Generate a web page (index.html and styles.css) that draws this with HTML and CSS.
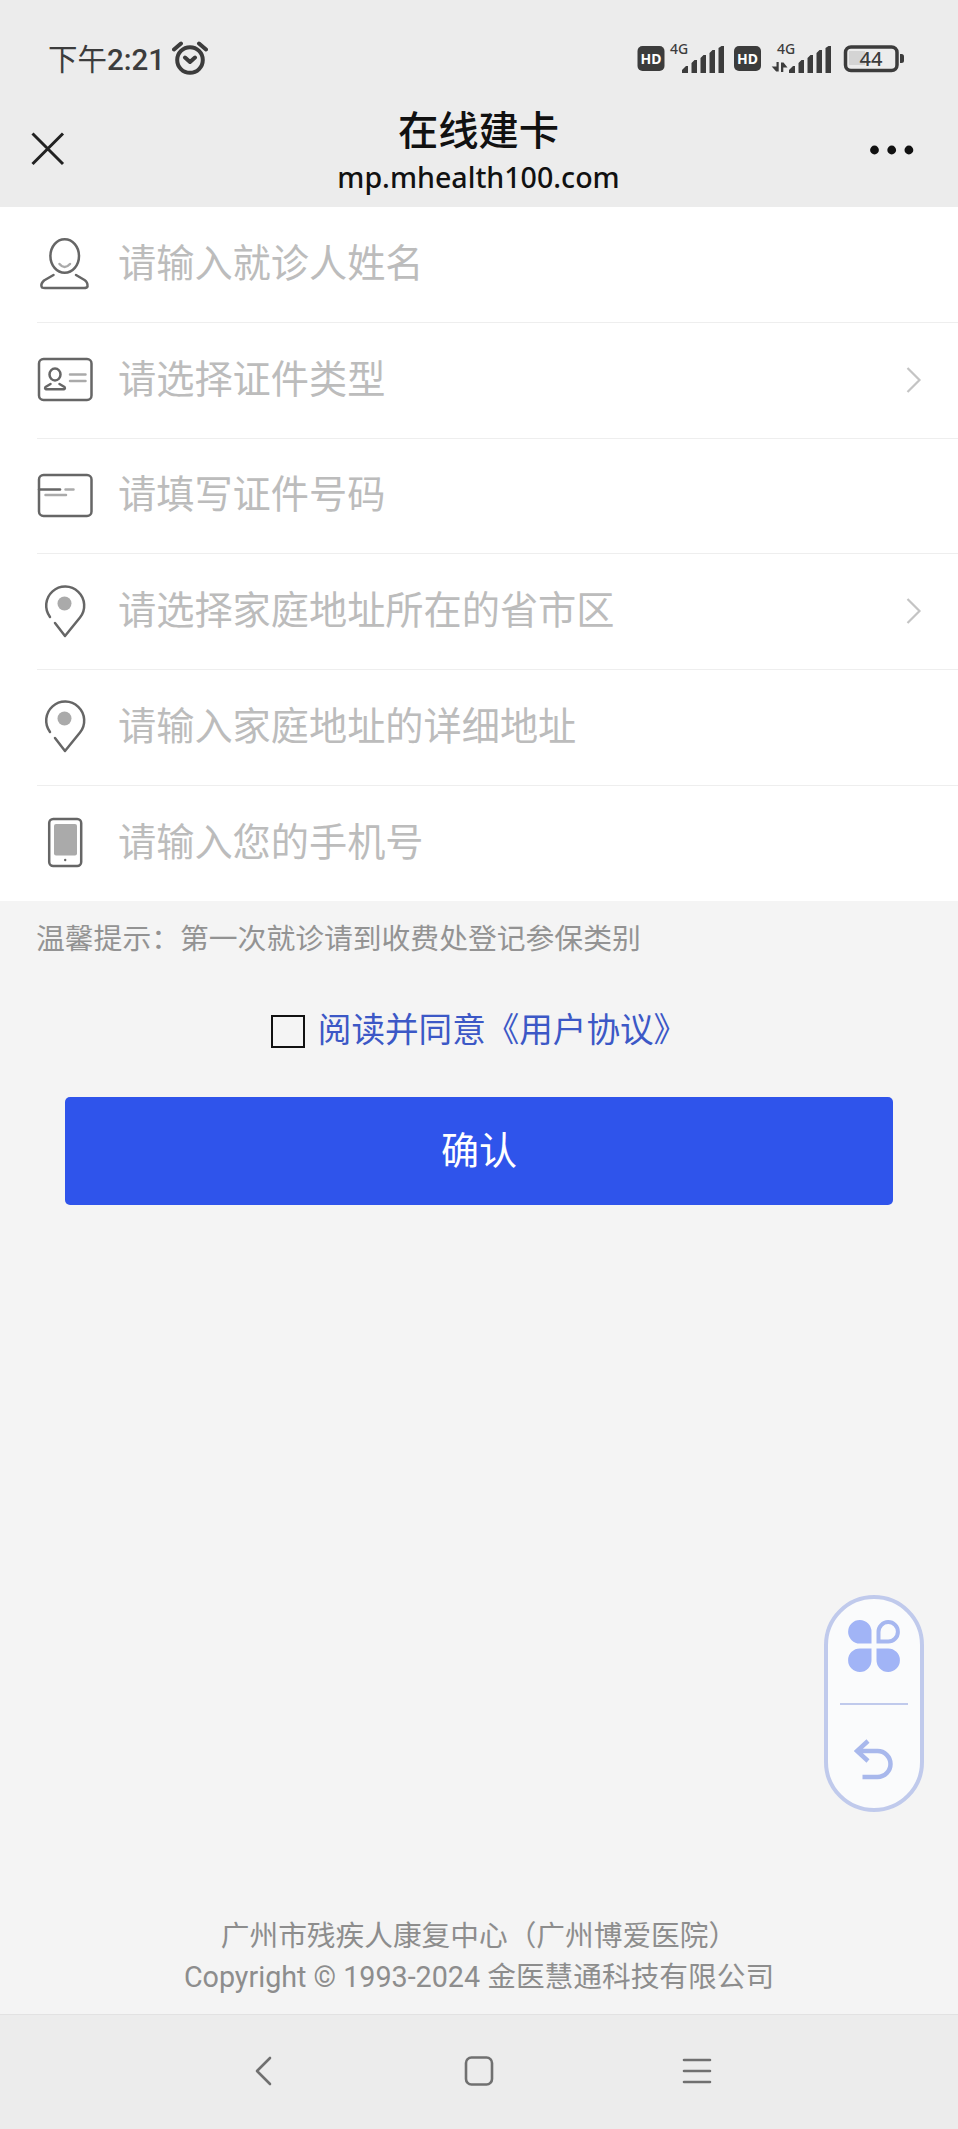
FILE: index.html
```html
<!DOCTYPE html>
<html lang="zh-CN">
<head>
  <meta charset="UTF-8">
  <title>在线建卡</title>
  <link rel="stylesheet" href="styles.css">
</head>
<body>
  <!-- 图标 -->
  <svg width="0" height="0" class="defs">
    <defs>
      <g id="bars">
        <path d="M0 27v-3l4-4h2v7z M9.5 27V17l3-3h2.500v13z M18.500 27V12l3-3h2.500v18z M27.500 27V7l3-3h2.500v23z M36.500 27V2l3-2h2.500v27z" />
      </g>
      <g id="pin">
        <path d="M10.500 37.500A19 19 0 1 1 40.500 38L25.500 56.500L15.500 43.500" />
        <circle cx="25" cy="24" r="7" class="solid" />
      </g>
    </defs>
  </svg>

  <div class="page">
    <header class="header">
      <div class="status">
        <div class="time"><span>下午</span>2:21</div>
        <svg class="alarm" width="36" height="34" viewBox="0 0 36 34">
          <circle cx="18" cy="19" r="12.800" />
          <path d="M2 8.500L9 2.500M34 8.500L27 2.500M13 16.500L18 21L23 16.500" />
        </svg>
        <svg class="signal" width="270" height="42" viewBox="0 -8 270 42">
          <rect x="0.500" y="5" width="27" height="25" rx="5" />
          <text x="14" y="22.500" class="hd">HD</text>
          <text x="33" y="13" class="net">4G</text>
          <use href="#bars" x="45" y="5" />
          <rect x="97" y="5" width="27" height="25" rx="5" />
          <text x="110.500" y="22.500" class="hd">HD</text>
          <text x="140" y="13" class="net">4G</text>
          <path d="M139.500 21h2.200v9.500h-2.500l-4.500-5h4.800zM144 31v-9.500h2.500l4 5h-4.200v4.500z" />
          <use href="#bars" x="152" y="5" />
          <rect x="212" y="10" width="16" height="14" class="charge" />
          <rect x="208.500" y="6" width="51.500" height="23.500" rx="5.500" class="battery" />
          <path d="M263 13h1.500q2.500 0 2.500 2.500v4q0 2.500-2.500 2.500h-1.500z" />
          <text x="234" y="25" class="level">44</text>
        </svg>
      </div>
      <div class="navbar">
        <svg class="close" width="34" height="34" viewBox="0 0 34 34"><path d="M1.500 1.500L32 32M32 1.500L1.500 32" /></svg>
        <div class="title">
          <h1>在线建卡</h1>
          <p>mp.mhealth100.com</p>
        </div>
        <svg class="more" width="44" height="10" viewBox="0 0 44 10">
          <circle cx="4.500" cy="5" r="4.400" /><circle cx="21.700" cy="5" r="4.400" /><circle cx="38.900" cy="5" r="4.400" />
        </svg>
      </div>
    </header>

    <main class="content">
      <div class="form">
        <div class="row">
          <svg class="icon" width="56" height="60" viewBox="0 2.500 56 60">
            <ellipse cx="27.700" cy="24.500" rx="14.300" ry="16.800" />
            <path d="M16.500 43.500L7 49Q3 53 5 56Q6 56.500 8 56.500H47Q50 56.500 50.500 55Q51 51 47.500 48.500L39 43.500" />
            <path d="M22.500 32.500Q27.500 38.500 33 32.500" class="light" />
          </svg>
          <span class="field">请输入就诊人姓名</span>
        </div>
        <div class="row">
          <svg class="icon" width="56" height="60" viewBox="0 -1 56 60">
            <rect x="2" y="8" width="52.500" height="41" rx="4.500" />
            <ellipse cx="18" cy="23.500" rx="5.500" ry="6" />
            <path d="M13.500 33L8.500 36Q7.500 38 9 38.300H27Q28.500 38 27.500 36L22.500 33" />
            <path d="M33 23.500H48.500M33 30H48.500" class="light" />
          </svg>
          <span class="field">请选择证件类型</span>
          <svg class="arrow" width="16" height="26" viewBox="0 0 16 26"><path d="M1.500 1L13.500 13L1.500 25" /></svg>
        </div>
        <div class="row">
          <svg class="icon" width="56" height="60" viewBox="0 -1 56 60">
            <rect x="2" y="8" width="52.500" height="41" rx="4.500" />
            <path d="M2 22.500H23" />
            <path d="M28.500 22.500H36.500M8.500 28H29" class="light" />
          </svg>
          <span class="field">请填写证件号码</span>
        </div>
        <div class="row">
          <svg class="icon" width="56" height="60" viewBox="-2.500 2.500 56 60"><use href="#pin" /></svg>
          <span class="field">请选择家庭地址所在的省市区</span>
          <svg class="arrow" width="16" height="26" viewBox="0 0 16 26"><path d="M1.500 1L13.500 13L1.500 25" /></svg>
        </div>
        <div class="row">
          <svg class="icon" width="56" height="60" viewBox="-2.500 2.500 56 60"><use href="#pin" /></svg>
          <span class="field">请输入家庭地址的详细地址</span>
        </div>
        <div class="row">
          <svg class="icon" width="56" height="60" viewBox="0 1.500 56 60">
            <rect x="12.200" y="7.500" width="32" height="47" rx="4" />
            <rect x="17" y="12.500" width="23" height="31.500" rx="2" class="solid" />
            <circle cx="28.200" cy="48.500" r="1.200" class="dot" />
          </svg>
          <span class="field">请输入您的手机号</span>
        </div>
      </div>

      <p class="tip">温馨提示：第一次就诊请到收费处登记参保类别</p>
      <div class="agree">
        <span class="checkbox"></span>
        <a>阅读并同意《用户协议》</a>
      </div>
      <button type="button" class="confirm">确认</button>

      <div class="float-menu">
        <svg width="54" height="54" viewBox="0 0 54 54" class="clover">
          <path d="M24.500 24.500H13A11.700 11.700 0 1 1 24.500 13zM24.500 29.500V41A11.700 11.700 0 1 1 13 29.500zM29.500 29.500H41A11.700 11.700 0 1 1 29.500 41z" />
          <path d="M31.500 22.500V13A9.700 9.700 0 1 1 41 22.500z" class="leaf" />
        </svg>
        <span class="line"></span>
        <svg width="40" height="42" viewBox="0 0 40 42" class="back">
          <path d="M14 2L3 12L14 22M3 12H23.500A13 13 0 0 1 23.500 38H8.500" />
        </svg>
      </div>

      <footer class="footer">
        <p>广州市残疾人康复中心（广州博爱医院）</p>
        <p>Copyright © 1993-2024 金医慧通科技有限公司</p>
      </footer>
    </main>

    <nav class="system">
      <svg width="30" height="30" viewBox="0 0 30 30"><path d="M24 2L11 15L24 28" /></svg>
      <svg width="30" height="30" viewBox="0 0 30 30"><rect x="2" y="1.500" width="26" height="27" rx="5.500" /></svg>
      <svg width="30" height="30" viewBox="0 0 30 30"><path d="M2 4H28M2 15H28M2 26H28" /></svg>
    </nav>
  </div>
</body>
</html>
```

FILE: styles.css
```css
* { box-sizing: border-box; }
body { margin: 0; background: #f4f4f4; font-family: Roboto, "Noto Sans CJK SC", sans-serif; }
h1, p { margin: 0; font-weight: 400; }
svg { display: block; flex-shrink: 0; fill: none; }
.defs { position: absolute; }
.page { height: 2129px; display: flex; flex-direction: column; overflow: hidden; }

/* 顶部 */
.header { height: 207px; background: #ececec; }
.status { height: 76px; display: flex; align-items: flex-start; padding: 33px 51px 0 48px; color: #3c3c3c; }
.time { width: 123px; padding-top: 9px; font-size: 29.500px; line-height: 36px; font-weight: 500; white-space: nowrap; }
.time span { font-weight: 400; }
.alarm { margin: 8px 0 0 1px; stroke: #3c3c3c; stroke-width: 4; stroke-linecap: round; stroke-linejoin: round; }
.signal { margin-left: auto; fill: #3c3c3c; }
.hd { fill: #fff; font: 700 14px "Noto Sans", sans-serif; text-anchor: middle; }
.net { font: 500 14px "Noto Sans", sans-serif; }
.level { font: 500 20px "Noto Sans", sans-serif; text-anchor: middle; }
.charge { fill: #d4d4d4; }
.battery { fill: none; stroke: #3c3c3c; stroke-width: 3.5; }
.navbar { height: 131px; display: flex; justify-content: space-between; padding: 0 44px 0 31px; }
.close { margin-top: 56px; stroke: #222; stroke-width: 3; }
.more { margin-top: 68.500px; fill: #111; }
.title { text-align: center; color: #111; padding: 33px 0 0 22px; }
.title h1 { font-size: 40.300px; line-height: 46px; font-weight: 500; }
.title p { font: 500 28.600px/44px "Noto Sans", sans-serif; }

/* 表单 */
.content { flex: 1; display: flex; flex-direction: column; }
.form { background: #fff; height: 693.500px; display: flex; flex-direction: column; padding-left: 37px; }
.row { flex: 1; display: flex; align-items: center; border-bottom: 1px solid #eee; padding-right: 36px; }
.row:last-child { border-bottom: none; }
.icon { stroke: #666; stroke-width: 2.5; stroke-linecap: round; stroke-linejoin: round; }
.icon .light { stroke: #aaa; }
.icon .dot { fill: #666; stroke: none; }
.icon .solid, .solid { fill: #aaa; stroke: none; }
.field { margin-left: 25px; flex: 1; font-size: 38.200px; line-height: 50px; color: #bcbcbc; padding-bottom: 1px; }
.arrow { margin-bottom: 1px; stroke: #c4c4c4; stroke-width: 2.2; }
.tip { margin-left: 36px; padding-top: 17px; font-size: 28.800px; line-height: 42px; color: #939393; }
.agree { display: flex; justify-content: center; align-items: center; gap: 13px; height: 50px; margin-top: 47px; }
.agree a { font-size: 33.600px; line-height: 50px; color: #3c58c6; padding-bottom: 2px; }
.checkbox { width: 34px; height: 33px; border: 2px solid #111; }
.confirm {
  margin: 40px 65px 0; height: 108px; padding: 0 0 7px; border: none; border-radius: 5px;
  background: #2f54eb; color: #fff; font: 400 38px "Noto Sans CJK SC", sans-serif;
}

/* 悬浮菜单 */
.float-menu {
  position: absolute; left: 824px; top: 1595px; width: 100px; height: 217px;
  border: 4px solid #c0caec; border-radius: 50px; background: #fafbfc;
  display: flex; flex-direction: column; align-items: center; padding-top: 20px;
}
.clover { fill: #a1b4f6; }
.clover .leaf { fill: none; stroke: #a6b7f0; stroke-width: 4; }
.line { width: 68px; height: 2px; background: #c0caec; margin: 30px 0 34px; }
.back { stroke: #a8b8ec; stroke-width: 4.5; }

.footer { margin-top: auto; padding-bottom: 16px; text-align: center; font-size: 28.700px; line-height: 41px; color: #8d8d8d; }
.system {
  height: 115px; background: #ececec; border-top: 1px solid #e2e2e2;
  display: flex; justify-content: center; gap: 188px; padding-top: 41px;
}
.system svg { stroke: #707070; stroke-width: 2.6; stroke-linecap: round; stroke-linejoin: round; }
```
